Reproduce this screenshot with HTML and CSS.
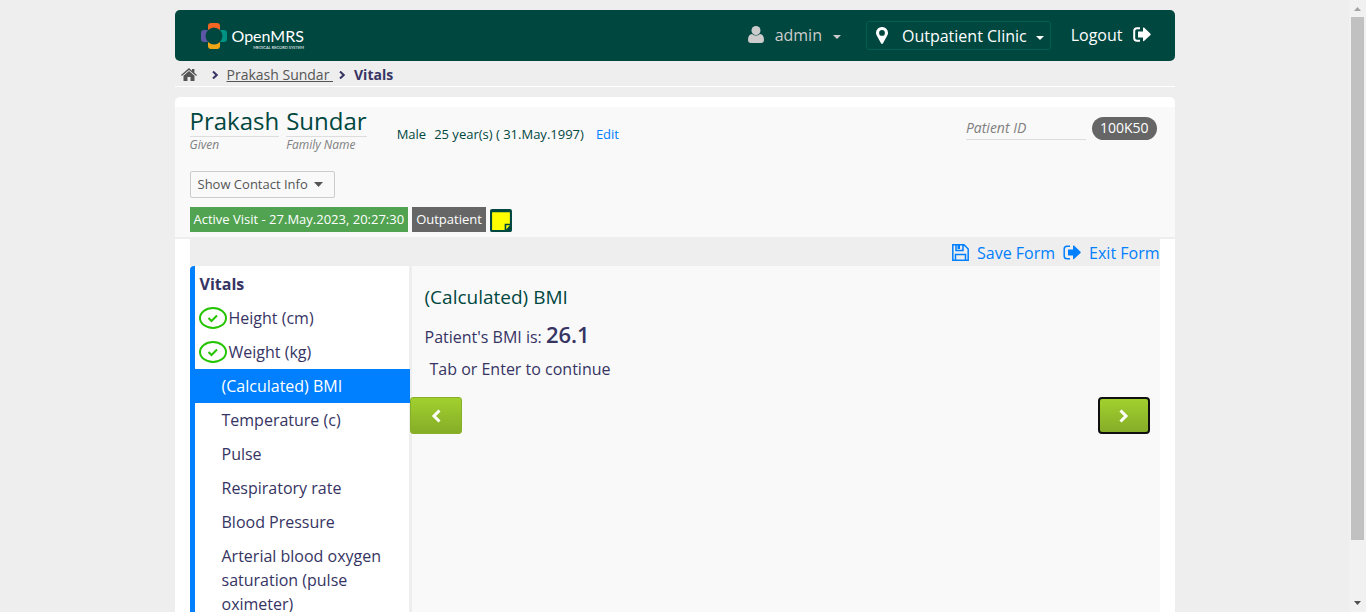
FILE: index.html
```html
<!DOCTYPE html>
<html lang="en">
<head>
<meta charset="utf-8">
<title>Vitals</title>
<link rel="stylesheet" href="styles.css">
</head>
<body>
<div class="viewport">
  <div class="page">
    <header class="topbar">
      <a class="logo" href="#" aria-label="OpenMRS home">
        <svg class="logo-mark" viewBox="0 0 26 26" aria-hidden="true">
          <path fill="#f26522" d="M7 7V3Q7 0 10 0H16Q19 0 19 3V7Q13 2 7 7Z"/>
          <path fill="#eea616" d="M7 19V23Q7 26 10 26H16Q19 26 19 23V19Q13 24 7 19Z"/>
          <path fill="#5b57a6" d="M7 7H3Q0 7 0 10V16Q0 19 3 19H7Q2 13 7 7Z"/>
          <path fill="#009384" d="M19 7H23Q26 7 26 10V16Q26 19 23 19H19Q24 13 19 7Z"/>
        </svg>
        <span class="logo-text"><span class="logo-name">OpenMRS</span><span class="logo-tag">MEDICAL RECORD SYSTEM</span></span>
      </a>
      <nav class="user-menu">
        <button class="menu-btn user-btn" type="button">
          <svg class="icon-user" viewBox="0 0 16 17" aria-hidden="true"><circle cx="8" cy="4.5" r="4.5"/><path d="M4 8Q8 11 12 8Q16 8.500 16 14Q16 17 13 17H3Q0 17 0 14Q0 8.500 4 8Z"/></svg>
          <span>admin</span>
          <svg class="caret" viewBox="0 0 8 4" aria-hidden="true"><path d="M0 0H8L4 4Z"/></svg>
        </button>
        <button class="menu-btn location-btn" type="button">
          <svg class="icon-pin" viewBox="0 0 12 17" aria-hidden="true"><path fill-rule="evenodd" d="M6 0A5.800 5.800 0 0 1 12 6Q12 7.500 11 9L7 16.300Q6 17.500 5 16.300L1 9Q0 7.500 0 6A5.800 5.800 0 0 1 6 0ZM6 3A2.900 2.900 0 1 0 6 8.800A2.900 2.900 0 1 0 6 3Z"/></svg>
          <span>Outpatient Clinic</span>
          <svg class="caret" viewBox="0 0 8 4" aria-hidden="true"><path d="M0 0H8L4 4Z"/></svg>
        </button>
        <a class="logout" href="#">Logout
          <svg class="icon-exit" viewBox="0 0 18 15" aria-hidden="true"><path class="stroke" d="M7 1.200H4Q1.200 1.200 1.200 4V11Q1.200 13.800 4 13.800H7"/><path d="M5 4.500H10V1Q10 0 11 .6L17.500 6.800Q18 7.300 17.500 7.900L11 14Q10 14.600 10 13.600V10.500H5Z"/></svg>
        </a>
      </nav>
    </header>

    <nav class="crumbs" aria-label="Breadcrumb">
      <a href="#" aria-label="Home"><svg class="icon-home" viewBox="0 0 16 13" aria-hidden="true"><path d="M8 0L11 2.700V1H13.400V4.800L16 7.100L15.200 8L8 1.900L.8 8L0 7.100Z"/><path d="M8 3L13.500 7.700V13H9.500V9H6.500V13H2.500V7.700Z"/></svg></a>
      <svg class="chev" viewBox="0 0 6 8" aria-hidden="true"><path d="M1 .5L4.700 4L1 7.500"/></svg>
      <a class="crumb-link" href="#">Prakash Sundar&nbsp;</a>
      <svg class="chev" viewBox="0 0 6 8" aria-hidden="true"><path d="M1 .5L4.700 4L1 7.500"/></svg>
      <strong>Vitals</strong>
    </nav>

    <main class="card">
      <section class="patient">
        <div class="identity">
          <h1 class="names">
            <span class="name"><span class="value">Prakash</span><em>Given</em></span>
            <span class="name"><span class="value">Sundar</span><em>Family Name</em></span>
          </h1>
          <div class="demographics"><span>Male</span><span>25 year(s) ( 31.May.1997)</span><a href="#">Edit</a></div>
          <div class="patient-id"><em>Patient ID</em><span class="id-pill">100K50</span></div>
        </div>
        <button class="contact-btn" type="button">Show Contact Info
          <svg class="contact-caret" viewBox="0 0 9 5" aria-hidden="true"><path d="M0 0H9L4.500 5Z"/></svg>
        </button>
        <div class="tags">
          <span class="tag active">Active Visit - 27.May.2023, 20:27:30</span>
          <span class="tag">Outpatient</span>
          <button class="note-btn" type="button" aria-label="Sticky note">
            <svg viewBox="0 0 21 22" aria-hidden="true"><rect width="21" height="22" rx="2" fill="#00473f"/><path fill="#ff0" d="M2 3H19V14H14V20H2Z"/><path fill="#ff0" d="M15.500 15.500H19L15.500 19.500Z"/></svg>
          </button>
        </div>
      </section>

      <section class="form">
        <div class="form-actions">
          <a href="#"><svg class="icon-save" viewBox="0 0 17 17" aria-hidden="true"><path class="stroke" d="M.8 .8H12L16.200 5V16.200H.8ZM3.500 16V10.500H13.500V16M4 1V6.500H11V1"/><path d="M5.500 1H8V5H5.500Z"/></svg>Save Form</a>
          <a href="#"><svg class="icon-exit" viewBox="0 0 18 15" aria-hidden="true"><path class="stroke" d="M7 1.200H4Q1.200 1.200 1.200 4V11Q1.200 13.800 4 13.800H7"/><path d="M5 4.500H10V1Q10 0 11 .6L17.500 6.800Q18 7.300 17.500 7.900L11 14Q10 14.600 10 13.600V10.500H5Z"/></svg>Exit Form</a>
        </div>
        <div class="form-body">
          <nav class="steps" aria-label="Form sections">
            <h2>Vitals</h2>
            <a class="done" href="#"><svg viewBox="0 0 28 22" aria-hidden="true"><ellipse cx="14" cy="11" rx="13" ry="10"/><path d="M9.500 11L12.500 14L18 8.500"/></svg>Height (cm)</a>
            <a class="done" href="#"><svg viewBox="0 0 28 22" aria-hidden="true"><ellipse cx="14" cy="11" rx="13" ry="10"/><path d="M9.500 11L12.500 14L18 8.500"/></svg>Weight (kg)</a>
            <a class="current" href="#" aria-current="step">(Calculated) BMI</a>
            <a href="#">Temperature (c)</a>
            <a href="#">Pulse</a>
            <a href="#">Respiratory rate</a>
            <a href="#">Blood Pressure</a>
            <a href="#">Arterial blood oxygen saturation (pulse oximeter)</a>
          </nav>
          <div class="question">
            <div class="answer">
              <h3>(Calculated) BMI</h3>
              <p class="bmi">Patient's BMI is: <strong>26.1</strong></p>
              <p class="hint">Tab or Enter to continue</p>
            </div>
            <div class="pager">
              <button class="pager-btn" type="button" aria-label="Previous"><svg viewBox="0 0 10 14" aria-hidden="true"><path d="M8.500 1.500L3 7L8.500 12.500"/></svg></button>
              <button class="pager-btn focused" type="button" aria-label="Next"><svg viewBox="0 0 10 14" aria-hidden="true"><path d="M1.500 1.500L7 7L1.500 12.500"/></svg></button>
            </div>
          </div>
        </div>
      </section>
    </main>
  </div>
  <div class="scrollbar" aria-hidden="true">
    <svg class="arrow up" viewBox="0 0 7 4"><path d="M0 4H7L3.500 0Z"/></svg>
    <div class="track"><div class="thumb"></div></div>
    <svg class="arrow" viewBox="0 0 7 4"><path d="M0 0H7L3.500 4Z"/></svg>
  </div>
</div>
</body>
</html>
```

FILE: styles.css
```css
* { box-sizing: border-box; }
body {
  margin: 0;
  background: #eee;
  color: #363463;
  font: 400 16px/24px "Open Sans", "Noto Sans", sans-serif;
}
h1, h2, h3, p { margin: 0; font: inherit; }
button { font: inherit; cursor: pointer; }
a { color: #007fff; text-decoration: none; }
svg { display: block; flex: none; fill: currentColor; }
.stroke { fill: none; stroke: currentColor; stroke-width: 1.5; }

.viewport {
  display: grid;
  grid-template-columns: minmax(0, 1fr) 17px;
  height: 100vh;
  overflow: hidden;
}
.page {
  display: flex;
  flex-direction: column;
  width: 100%;
  max-width: 1000px;
  min-height: 0;
  margin: 0 auto;
  padding-top: 10px;
}

/* Top bar */
.topbar {
  display: flex;
  align-items: center;
  justify-content: space-between;
  flex: none;
  height: 51px;
  padding: 0 24px 0 26px;
  border-radius: 5px;
  background: #00473f;
  color: #fff;
}
.logo { display: flex; align-items: center; gap: 5px; color: #fff; }
.logo-mark { width: 26px; height: 26px; }
.logo-text { display: flex; flex-direction: column; padding-top: 5px; }
.logo-name { font: 400 16px/19px Lato, sans-serif; }
.logo-tag { align-self: flex-end; font: 400 4px/5px Lato, sans-serif; }
.user-menu { display: flex; align-items: center; gap: 20px; }
.menu-btn {
  display: flex;
  align-items: center;
  padding: 0;
  border: 0;
  background: none;
  color: inherit;
}
.user-btn { gap: 11px; margin: 0 5px 2px 0; color: #ccc; }
.user-btn .caret { margin-top: 4px; }
.icon-user { width: 16px; height: 17px; }
.icon-pin { width: 12px; height: 17px; margin-right: 14px; }
.location-btn {
  height: 29px;
  padding: 0 6px 0 9px;
  border: 1px solid #005e54;
  border-radius: 3px;
}
.location-btn .caret { margin: 4px 0 0 9px; }
.caret { width: 8px; height: 4px; }
.logout {
  display: flex;
  align-items: center;
  gap: 10px;
  margin-bottom: 2px;
  color: #fff;
}
.icon-exit { width: 18px; height: 15px; }
.logout .stroke { stroke-width: 2; }

/* Breadcrumb */
.crumbs {
  display: flex;
  align-items: center;
  flex: none;
  height: 26px;
  padding: 3px 0 0 6px;
  margin-bottom: 10px;
  border-bottom: 1px solid #fff;
  font-size: 14px;
  line-height: 20px;
}
.crumbs a { color: #555; }
.crumbs strong { font-weight: 700; }
.crumbs .crumb-link { margin-right: 6px; text-decoration: underline; }
.icon-home { width: 16px; height: 13px; margin: 0 15px 2px 0; }
.chev {
  width: 6px;
  height: 8px;
  margin-right: 9px;
  fill: none;
  stroke: currentColor;
  stroke-width: 2;
}

/* Patient header */
.card {
  display: flex;
  flex-direction: column;
  flex: 1 0 auto;
  padding-top: 10px;
  border-radius: 5px 5px 0 0;
  background: #fff;
}
.patient {
  padding: 0 18px 5px 15px;
  border-bottom: 2px solid #eee;
  background: #f9f9f9;
  color: #00473f;
}
.identity { display: flex; align-items: flex-start; height: 64px; }
.names { display: flex; gap: 7px; }
.name { display: flex; flex-direction: column; }
.name .value {
  height: 30px;
  border-bottom: 1px solid #ddd;
  font-size: 24px;
  line-height: 28px;
}
.name em { color: #808080; font-size: 12px; line-height: 16px; }
.demographics {
  display: flex;
  gap: 8px;
  padding: 17px 0 0 30px;
  font-size: 13px;
  line-height: 20px;
}
.demographics a { padding-left: 4px; }
.patient-id {
  display: flex;
  gap: 6px;
  margin-left: auto;
  padding-top: 10px;
  font-size: 14px;
  line-height: 22px;
}
.patient-id em { width: 120px; border-bottom: 1px solid #ddd; color: #808080; }
.id-pill {
  padding: 0 8px;
  border-radius: 12px;
  background: #666;
  color: #fff;
}
.contact-btn {
  display: flex;
  align-items: center;
  gap: 6px;
  height: 27px;
  padding: 0 11px 1px 7px;
  margin-bottom: 9px;
  border: 1px solid #ccc;
  border-radius: 2px;
  background: #f9f9f9;
  color: #555;
  font-size: 13px;
}
.contact-caret { width: 9px; height: 5px; }
.tags { display: flex; align-items: center; gap: 4px; }
.tag {
  padding: 0 4px;
  background: #666;
  color: #fff;
  font-size: 13px;
  line-height: 25px;
}
.tag.active { background: #51a351; }
.note-btn { width: 22px; height: 22px; padding: 0; border: 0; background: none; }

/* Form */
.form {
  display: flex;
  flex-direction: column;
  flex: 1;
  margin: 0 15px;
}
.form-actions {
  display: flex;
  justify-content: flex-end;
  gap: 8px;
  height: 27px;
  background: #eee;
}
.form-actions a { display: flex; align-items: center; gap: 8px; }
.icon-save { width: 17px; height: 17px; }
.form-body {
  display: grid;
  grid-template-columns: 220px minmax(0, 1fr);
  flex: 1;
}
.steps {
  border-left: 5px solid #007fff;
  border-top-left-radius: 4px;
  background: linear-gradient(#eee, #eee) right / 1px 100% no-repeat #fff;
}
.steps h2, .steps a {
  display: flex;
  align-items: center;
  padding: 5px 20px 5px 27px;
  color: #363463;
}
.steps h2 { padding: 6px 5px 5px; font-weight: 700; }
.steps .done { padding-left: 4px; gap: 2px; }
.done svg {
  width: 28px;
  height: 22px;
  fill: none;
  stroke: #24c400;
  stroke-width: 2;
}
.steps .current { background: #007fff; color: #fff; }
.question {
  background: linear-gradient(#eee, #eee) left / 2px 100% no-repeat #f9f9f9;
}
.answer { padding: 19px 15px 16px; }
.answer h3 { color: #00473f; font-size: 19px; }
.bmi { padding: 12px 0 7px; line-height: 26px; }
.bmi strong { font-size: 22px; font-weight: 600; }
.hint { padding-left: 5px; }
.pager { display: flex; justify-content: space-between; padding-right: 10px; }
.pager-btn {
  display: grid;
  place-items: center;
  width: 52px;
  height: 37px;
  padding: 0;
  border: 1px solid #88af28;
  border-radius: 3px;
  background: linear-gradient(#a1d02e, #86ad28);
  color: #fff;
}
.pager-btn svg { width: 10px; height: 14px; fill: none; stroke: #fff; stroke-width: 3; }
.pager-btn.focused { border: 2px solid #101010; border-radius: 4px; }

/* Scrollbar */
.scrollbar {
  display: flex;
  flex-direction: column;
  align-items: center;
  padding: 7px 0;
  background: #f1f1f1;
  color: #505050;
}
.arrow { width: 7px; height: 4px; }
.arrow.up { color: #a3a3a3; }
.track { flex: 1; width: 13px; padding: 6px 0; }
.thumb { height: 90.5%; background: #c1c1c1; }
```
